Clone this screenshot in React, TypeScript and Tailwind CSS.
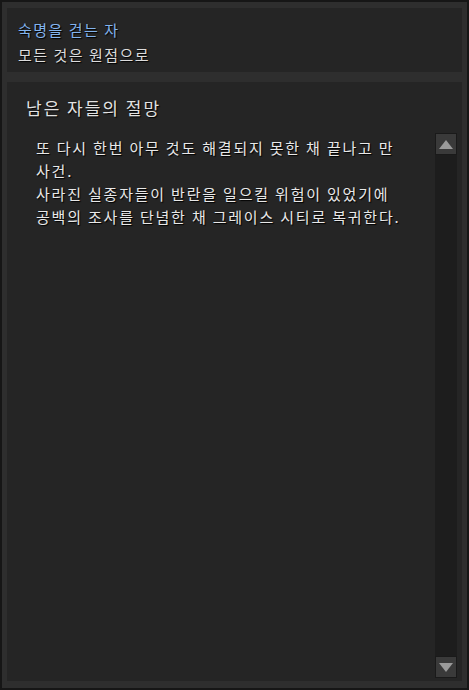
import React from 'react';

const font = { fontFamily: '"Noto Sans CJK KR", "Noto Sans", sans-serif' };

export default function App() {
  return (
    <div
      className="w-[469px] h-[690px] bg-[#2e2e2e] border-2 border-[#161616] px-[5px] pt-[6px] pb-[7px] flex flex-col gap-[10px] text-[#e6e6e6] [text-shadow:1px_1px_1px_#000] break-keep"
      style={font}
    >
      <div className="h-[64px] bg-[#252525] px-[11px] pt-[9px] flex flex-col">
        <div className="text-[15px] leading-[25px] tracking-[1.5px] text-[#83b4ee]">숙명을 걷는 자</div>
        <div className="text-[15px] leading-[25px] tracking-[1.5px] text-[#dcdcdc]">모든 것은 원점으로</div>
      </div>
      <div className="flex-1 bg-[#252525] flex flex-col min-h-0">
        <div className="px-[19px] pt-[14px] text-[17px] leading-[24px] tracking-[2px] text-[#e2e2e2]">남은 자들의 절망</div>
        <div className="flex-1 flex min-h-0 mt-[13px]">
          <div className="flex-1 pl-[29px] pr-[20px] pt-[3px] text-[15px] leading-[23px] tracking-[1.8px] text-[#e8e8e8]">
            <p>또 다시 한번 아무 것도 해결되지 못한 채 끝나고 만 사건.</p>
            <p>사라진 실종자들이 반란을 일으킬 위험이 있었기에</p>
            <p>공백의 조사를 단념한 채 그레이스 시티로 복귀한다.</p>
          </div>
          <div className="w-[22px] mr-[5px] mb-[3px] bg-[#1d1d1d] flex flex-col justify-between">
            <div className="h-[22px] bg-[#3a3a3a] border border-[#1a1a1a] flex items-center justify-center">
              <svg width="14" height="9" viewBox="0 0 14 9"><polygon points="7,0 14,9 0,9" fill="#9a9a9a" /></svg>
            </div>
            <div className="h-[22px] bg-[#3a3a3a] border border-[#1a1a1a] flex items-center justify-center">
              <svg width="14" height="9" viewBox="0 0 14 9"><polygon points="0,0 14,0 7,9" fill="#9a9a9a" /></svg>
            </div>
          </div>
        </div>
      </div>
    </div>
  );
}
